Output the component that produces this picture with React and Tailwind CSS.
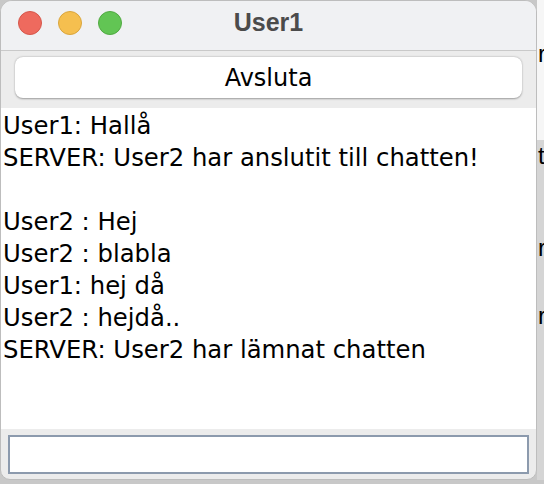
import React from "react";

const lines = [
  "User1: Hallå",
  "SERVER: User2 har anslutit till chatten!",
  "\u00a0",
  "User2 : Hej",
  "User2 : blabla",
  "User1: hej då",
  "User2 : hejdå..",
  "SERVER: User2 har lämnat chatten",
];

export default function App() {
  return (
    <div className="w-[544px] h-[484px] overflow-hidden bg-[#c8c8c8] flex flex-col" style={{ fontFamily: '"DejaVu Sans", sans-serif' }}>
      <div className="flex h-[480px] shrink-0">
        <div className="w-[537px] h-[480px] flex flex-col bg-[#ececec] rounded-t-[12px] rounded-b-[10px] overflow-hidden border border-[#bdbdbd]">
          {/* Title bar */}
          <div className="h-[50px] shrink-0 bg-[#f0f1f3] border-b border-[#c9c9c9] flex items-center relative">
            <div className="flex items-center gap-[16px] pl-[17px] pb-[6px]">
              <span className="w-[24px] h-[24px] rounded-full bg-[#ee6a5e] border border-[#d5574b]" />
              <span className="w-[24px] h-[24px] rounded-full bg-[#f5bf4f] border border-[#d9a53d]" />
              <span className="w-[24px] h-[24px] rounded-full bg-[#62c554] border border-[#51a942]" />
            </div>
            <div className="absolute left-0 right-0 top-0 h-[44px] flex items-center justify-center text-[25px] font-bold text-[#4b4b4b]" style={{ fontFamily: '"Liberation Sans", Arial, sans-serif' }}>
              <span>User1</span>
            </div>
          </div>
          {/* Button row */}
          <div className="h-[57px] shrink-0 px-[14px] pt-[6px]">
            <div className="h-[41px] bg-white rounded-[8px] shadow-[0_0.5px_2px_rgba(0,0,0,0.35)] flex items-center justify-center text-[24px] text-black">
              Avsluta
            </div>
          </div>
          {/* Text area */}
          <div className="h-[321px] shrink-0 bg-white pl-[2px] pt-[2px] text-[24.3px] leading-[32px] text-black whitespace-nowrap">
            {lines.map((l, i) => (
              <div key={i}>{l}</div>
            ))}
          </div>
          {/* Input */}
          <div className="flex-1 px-[7px] pt-[6px]">
            <div className="h-[39px] bg-white border-2 border-[#8c9aad]" />
          </div>
        </div>
        <div className="flex-1 flex flex-col text-[24px] leading-none text-black overflow-hidden" style={{ fontFamily: '"Liberation Sans", Arial, sans-serif' }}>
          <div className="h-[140px] bg-[#f6f6f6] pt-[42px] pl-[1px]">r</div>
          <div className="flex-1 bg-[#d5d5d5] pl-[1px]">
            <div className="mt-[4px]">t</div>
            <div className="mt-[68px]">r</div>
            <div className="mt-[44px]">r</div>
          </div>
        </div>
      </div>
      <div className="flex-1 bg-[#c8c8c8]" />
    </div>
  );
}
